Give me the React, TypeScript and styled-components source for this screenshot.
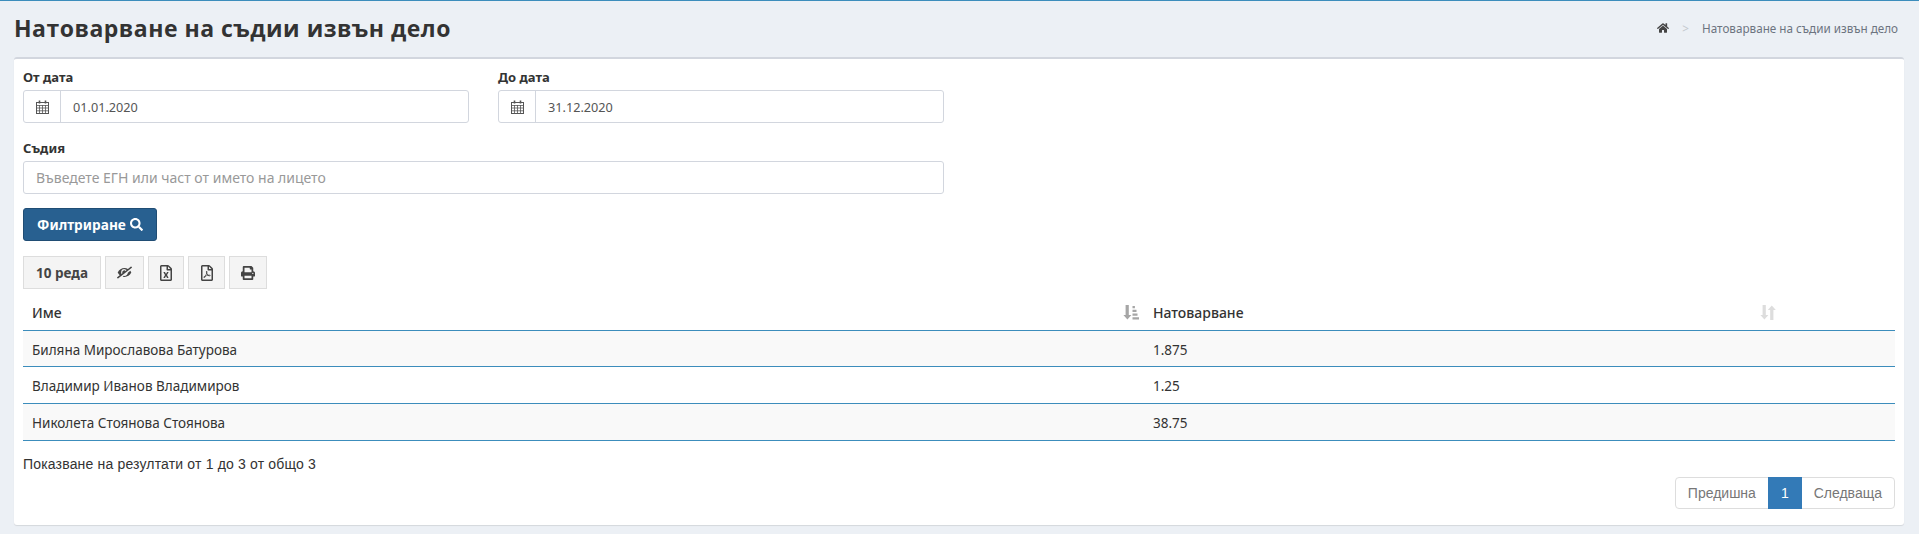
import React from 'react'
import styled, { createGlobalStyle } from 'styled-components'
import { FaEyeSlash, FaHome, FaPrint, FaRegFileExcel, FaRegFilePdf, FaSearch } from 'react-icons/fa'

const GlobalStyle = createGlobalStyle`
  html, body {
    margin: 0;
    padding: 0;
    background: #ecf0f5;
    font-family: 'Noto Sans', 'Open Sans', sans-serif;
    color: #333333;
  }
  * {
    box-sizing: border-box;
  }
`

const Page = styled.div`
  width: 1919px;
  height: 534px;
  overflow: hidden;
  border-top: 1px solid #3c8dbc;
  padding: 0 15px 0 14px;
`

const Header = styled.div`
  height: 56px;
  display: flex;
  justify-content: space-between;
  align-items: center;
  padding-bottom: 2px;
`

const Title = styled.h1`
  margin: 0;
  font-family: 'Open Sans', sans-serif;
  font-size: 23px;
  font-weight: 700;
  color: #333333;
  letter-spacing: 0.5px;
`

const Breadcrumb = styled.div`
  display: flex;
  align-items: center;
  gap: 13px;
  font-size: 11.7px;
  color: #6c7480;
  padding-right: 6px;
`

const Separator = styled.span`
  color: #c4c8ce;
`

const Card = styled.div`
  height: 468px;
  background: #fff;
  border-top: 2px solid #d2d6de;
  border-radius: 3px;
  box-shadow: 0 1px 1px rgba(0, 0, 0, 0.1);
  padding: 9px 9px 0;
`

const FieldRow = styled.div`
  display: flex;
  gap: 29px;
`

const Field = styled.div<{ $wide?: boolean }>`
  width: ${props => (props.$wide ? '921px' : '446px')};
  margin-bottom: ${props => (props.$wide ? '14px' : '16px')};
`

const Label = styled.div`
  height: 22px;
  font-size: 13px;
  line-height: 18px;
  font-weight: 700;
  color: #333333;
`

const InputGroup = styled.div`
  display: flex;
  height: 33px;
  border: 1px solid #d2d6de;
  border-radius: 3px;
`

const Addon = styled.div`
  width: 37px;
  display: flex;
  align-items: center;
  justify-content: center;
  border-right: 1px solid #d2d6de;
  color: #555555;
`

const InputText = styled.div<{ $placeholder?: boolean }>`
  flex: 1;
  display: flex;
  align-items: center;
  padding: 0 12px;
  font-size: ${props => (props.$placeholder ? '14px' : '12.7px')};
  color: ${props => (props.$placeholder ? '#999999' : '#555555')};
`

const FilterButton = styled.button`
  display: flex;
  align-items: center;
  justify-content: center;
  gap: 4px;
  width: 134px;
  height: 33px;
  padding: 0;
  background: #286090;
  border: 1px solid #204d74;
  border-radius: 3px;
  color: #fff;
  font-family: inherit;
  font-size: 13.7px;
  font-weight: 700;
`

const Toolbar = styled.div`
  display: flex;
  gap: 4px;
  margin-top: 15px;
`

const ToolButton = styled.div<{ $width: number }>`
  display: flex;
  align-items: center;
  justify-content: center;
  width: ${props => props.$width}px;
  height: 33px;
  background: #f4f4f4;
  border: 1px solid #dddddd;
  color: #444444;
  font-size: 13.5px;
  font-weight: 700;
`

// the reference has the slash leaning the other way
const EyeSlash = styled(FaEyeSlash)`
  transform: scaleX(-1);
`

const Table = styled.table`
  width: 1872px;
  border-collapse: separate;
  border-spacing: 0;
  table-layout: fixed;
  font-size: 13.5px;
`

const HeadCell = styled.th`
  height: 42px;
  padding: 5px 5px 0 9px;
  text-align: left;
  font-size: 14px;
  font-weight: 500;
  color: #333333;
  border-bottom: 1px solid #3c8dbc;
`

const HeadInner = styled.div`
  display: flex;
  justify-content: space-between;
  align-items: center;
`

const Cell = styled.td`
  height: 37px;
  padding: 2px 9px 0;
  color: #333333;
  border-bottom: 1px solid #3c8dbc;
`

const Row = styled.tr<{ $odd: boolean }>`
  background: ${props => (props.$odd ? '#f9f9f9' : '#fff')};

  &:first-child ${Cell} {
    height: 36px;
  }
`

const Info = styled.div`
  margin-top: 13px;
  height: 20px;
  font-family: 'Liberation Sans', Arial, sans-serif;
  font-size: 14px;
  line-height: 20px;
  letter-spacing: 0.17px;
  color: #333333;
`

const PagerRow = styled.div`
  display: flex;
  justify-content: flex-end;
  margin-top: 3px;
`

const Pager = styled.div`
  display: flex;
  height: 32px;
  border: 1px solid #dddddd;
  border-radius: 4px;
  font-family: 'Liberation Sans', Arial, sans-serif;
  font-size: 14px;
  color: #777777;
`

const PageItem = styled.div<{ $active?: boolean }>`
  display: flex;
  align-items: center;
  padding: 0 ${props => (props.$active ? '13px' : '12px')};
  margin: ${props => (props.$active ? '-1px 0' : '0')};
  background: ${props => (props.$active ? '#337ab7' : 'transparent')};
  color: ${props => (props.$active ? '#fff' : '#777777')};
`

const CalendarIcon: React.FC = () => (
  <svg width="13" height="14" viewBox="0 0 13 14" fill="none" stroke="currentColor">
    <rect x="0.5" y="2.5" width="12" height="11" />
    <path d="M0 5.5h13M0 8h13M0 10.8h13M3.5 5v9M6.5 5v9M9.5 5v9" strokeWidth="0.8" />
    <path d="M3.5 0.5v3M9.5 0.5v3" strokeWidth="1.6" />
  </svg>
)

const SortIcon: React.FC<{ color: string; bars?: boolean }> = ({ color, bars }) => (
  <svg width="16" height="15" viewBox="0 0 16 15" fill={color}>
    <path d="M2.6 0h3.2v10H8.4l-4 4.6L0.4 10h2.2z" />
    {bars ? (
      <path d="M9.5 1h2.4v2.2H9.5zM9.5 4.8h4v2.2h-4zM9.5 8.6h5v2.2h-5zM9.5 12.3h6.5v2.2H9.5z" />
    ) : (
      <path d="M10.2 15V5H7.8l4-4.6L15.8 5h-2.4v10z" />
    )}
  </svg>
)

const rows = [
  { name: 'Биляна Мирославова Батурова', load: '1.875' },
  { name: 'Владимир Иванов Владимиров', load: '1.25' },
  { name: 'Николета Стоянова Стоянова', load: '38.75' },
]

const App: React.FC = () => {
  return (
    <Page>
      <GlobalStyle />
      <Header>
        <Title>Натоварване на съдии извън дело</Title>
        <Breadcrumb>
          <FaHome size={12} color="#444444" />
          <Separator>&gt;</Separator>
          <span>Натоварване на съдии извън дело</span>
        </Breadcrumb>
      </Header>
      <Card>
        <FieldRow>
          <Field>
            <Label>От дата</Label>
            <InputGroup>
              <Addon><CalendarIcon /></Addon>
              <InputText>01.01.2020</InputText>
            </InputGroup>
          </Field>
          <Field>
            <Label>До дата</Label>
            <InputGroup>
              <Addon><CalendarIcon /></Addon>
              <InputText>31.12.2020</InputText>
            </InputGroup>
          </Field>
        </FieldRow>
        <Field $wide>
          <Label>Съдия</Label>
          <InputGroup>
            <InputText $placeholder>Въведете ЕГН или част от името на лицето</InputText>
          </InputGroup>
        </Field>
        <FilterButton>
          Филтриране <FaSearch size={13} />
        </FilterButton>
        <Toolbar>
          <ToolButton $width={78}>10 реда</ToolButton>
          <ToolButton $width={39}><EyeSlash size={15} /></ToolButton>
          <ToolButton $width={36}><FaRegFileExcel size={16} /></ToolButton>
          <ToolButton $width={37}><FaRegFilePdf size={16} /></ToolButton>
          <ToolButton $width={38}><FaPrint size={14} /></ToolButton>
        </Toolbar>
        <Table>
          <colgroup>
            <col style={{ width: 1121 }} />
            <col style={{ width: 637 }} />
            <col />
          </colgroup>
          <thead>
            <tr>
              <HeadCell>
                <HeadInner>
                  <span>Име</span>
                  <SortIcon color="#a6a6a6" bars />
                </HeadInner>
              </HeadCell>
              <HeadCell>
                <HeadInner>
                  <span>Натоварване</span>
                  <SortIcon color="#dddddd" />
                </HeadInner>
              </HeadCell>
              <HeadCell />
            </tr>
          </thead>
          <tbody>
            {rows.map((row, i) => (
              <Row $odd={i % 2 === 0} key={row.name}>
                <Cell>{row.name}</Cell>
                <Cell>{row.load}</Cell>
                <Cell />
              </Row>
            ))}
          </tbody>
        </Table>
        <Info>Показване на резултати от 1 до 3 от общо 3</Info>
        <PagerRow>
          <Pager>
            <PageItem>Предишна</PageItem>
            <PageItem $active>1</PageItem>
            <PageItem>Следваща</PageItem>
          </Pager>
        </PagerRow>
      </Card>
    </Page>
  )
}

export default App
